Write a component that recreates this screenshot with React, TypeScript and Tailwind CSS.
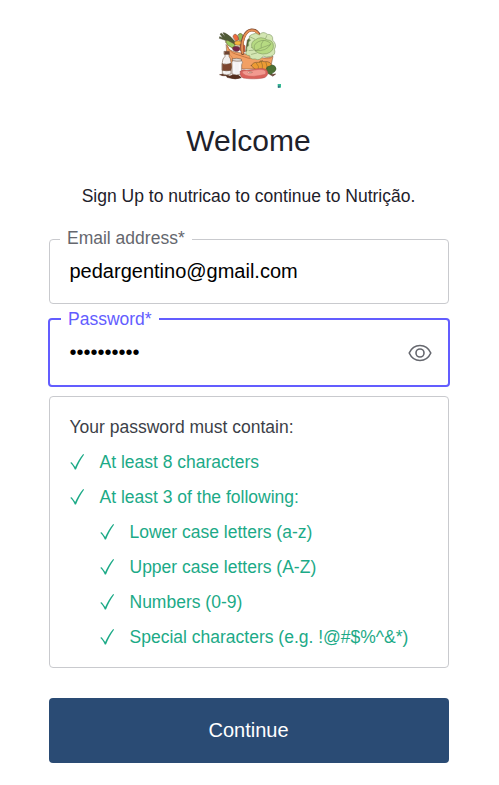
import type { ReactNode } from "react";

function BasketLogo() {
  return (
    <svg viewBox="0 0 240 225" className="h-[75px] w-[80px]" strokeLinejoin="round" strokeLinecap="round" aria-hidden="true">
      <g stroke="#6b4a35" strokeWidth="1.5">
        <path d="M56 66Q42 58 28 55L29 50L38 53L30 42L35 40L46 50L39 38L45 39Q64 48 80 72L68 78Z" fill="#4f5a35" stroke="#4a4a30" />
        <path d="M47 66Q47 59 55 62L72 71L76 79L67 84Q51 77 47 66Z" fill="#9ccb60" />
        <path d="M69 50Q70 41 78 43Q86 49 86 59L77 64Z" fill="#ef6b3d" />
        <path d="M84 44Q91 36 98 44L99 65L88 61Z" fill="#8fbd56" />
        <ellipse cx="84" cy="69" rx="11" ry="7" fill="#f6b340" />
        <path d="M90 75Q99 69 105 77V96L91 92Z" fill="#e95d38" />
        <path d="M67 84Q69 78 78 79Q90 78 90 88Q86 97 75 94Q67 91 67 84Z" fill="#762447" />
        <path d="M107 94L112 60Q124 45 133 60L131 103Z" fill="#4e6d37" />
        <path d="M49 74L58 89Q74 98 94 99L130 108Q164 119 189 109L181 147H66L51 109Z" fill="#f2a064" />
        <path d="M52 77Q58 96 76 102L104 111Q125 119 132 114" fill="none" stroke="#c77642" strokeWidth="3" />
        <path d="M55 99Q66 107 71 121M162 115Q180 119 186 112" fill="none" stroke="#bd7044" />
      </g>
      <path d="M98 100C90 63 106 31 124 30C137 29 146 38 149 49" fill="none" stroke="#7c4a31" strokeWidth="9.5" />
      <path d="M98 99C91 63 107 32 124 31C136 30 144 38 148 49" fill="none" stroke="#e58f55" strokeWidth="6" />
      <g fill="#d3e6b2" stroke="#768e5b" strokeWidth="1.5" transform="translate(-8 -4) scale(1.06 1.04)">
        <path d="M121 62Q113 49 128 45Q137 38 147 47Q157 34 170 45Q187 45 185 62Q198 75 190 88Q195 105 179 109Q166 113 158 108Q148 123 135 116Q120 119 120 107Q103 105 112 92Q109 83 117 77Q114 68 121 62Z" />
        <path d="M126 83Q122 67 136 61Q151 49 169 61Q187 62 187 80Q187 95 168 101Q144 107 126 83Z" fill="#b6da82" />
        <path d="M136 92Q125 76 145 66Q164 57 180 72Q168 96 136 92ZM139 91Q154 83 178 75M152 83Q150 73 158 64M125 103L140 99M120 52L134 59M168 49L165 57M118 92L130 91" fill="none" />
      </g>
      <g stroke="#654731" strokeWidth="1.5">
        <path d="M124 137Q129 125 145 127Q151 120 162 125Q183 122 186 140Q182 154 164 153Q136 155 124 137Z" fill="#ed9b34" />
        <path d="M139 129Q149 138 145 150M153 123Q160 134 157 150M168 127Q174 138 168 150M148 128L158 121" fill="none" stroke="#76602b" />
        <path d="M170 146Q170 138 179 138Q188 131 195 139Q202 147 194 155Q188 157 184 164L176 162Q168 155 170 146Z" fill="#4d7135" stroke="#36512d" />
        <path d="M30 164Q40 160 48 164L60 168L70 163Q86 163 94 173Q75 180 60 174L51 172L49 167Q38 169 30 164ZM182 164L197 162L189 168Z" fill="#552e1e" stroke="#552e1e" />
        <path d="M45 102V109Q37 116 37 127V161Q48 168 63 162V127Q62 115 57 109V102Z" fill="#f2f0ef" />
        <path d="M43 94H58V103H43Z" fill="#704331" />
        <path d="M37 131Q49 135 63 130V151Q49 154 37 151Z" fill="#7d462f" />
        <path d="M42 122L41 129M43 155V160" stroke="#ffffff" strokeWidth="2" />
        <path d="M68 121Q64 127 66 136V162Q79 168 95 162V134Q101 127 94 120Z" fill="#f3f2f3" />
        <path d="M68 116Q80 113 94 117V123Q80 125 68 122Z" fill="#dcd7d4" />
        <path d="M72 130V157M88 131V155" stroke="#ffffff" strokeWidth="2" />
        <path d="M91 154Q99 147 110 151C133 148 151 143 164 147C178 153 176 167 163 173C145 178 115 177 100 174Q88 169 91 154Z" fill="#db625b" stroke="#aa4d49" />
        <path d="M96 156Q101 150 119 153Q149 146 162 150Q171 154 166 163Q145 168 129 169Q101 169 96 156Z" fill="#f29a90" stroke="#c96761" />
        <ellipse cx="120" cy="157" rx="7" ry="2.8" fill="#f9e2d2" stroke="#bd6d60" />
        <path d="M118 157H124" stroke="#8b4c3c" />
      </g>
      <path d="M203 192H213V203H203Z" fill="#35ba94" />
      <path d="M204 197H209V203H204Z" fill="#356b83" />
    </svg>
  );
}

function EyeIcon() {
  return (
    <svg viewBox="0 0 24 18" className="mr-[-3.5px] h-[18px] w-[24px] shrink-0" fill="none" stroke="#65676e" strokeWidth="1.6" aria-hidden="true">
      <path d="M1.2 9C3.4 4.2 7 1.5 12 1.5S20.6 4.2 22.8 9C20.6 13.8 17 16.5 12 16.5S3.4 13.8 1.2 9Z" strokeLinejoin="round" />
      <circle cx="12" cy="9" r="4" />
    </svg>
  );
}

function Requirement({ children }: { children: ReactNode }) {
  return (
    <div className="flex h-[35px] items-center">
      <svg viewBox="0 0 14 16" className="mr-4 h-4 w-[14px] shrink-0" fill="#1caa87" aria-hidden="true">
        <path d="M.2 8.8L1.7 8.2L5.2 13C7.2 8.5 9.7 4.2 13 .2L14.2 .4C10.8 5 8.2 9.8 6 15.4H4.8C3.6 12.8 2.2 10.6 .2 8.8Z" />
      </svg>
      <span className="whitespace-nowrap">{children}</span>
    </div>
  );
}

export default function App() {
  return (
    <main className="min-h-[785px] w-[499px] bg-white pt-5 font-['Liberation_Sans',Arial,sans-serif] text-[#1e212a]">
      <header className="flex flex-col items-center">
        <BasketLogo />
        <h1 className="mr-[2px] mt-[28px] text-[30px] leading-9">Welcome</h1>
        <p className="mr-[2px] mt-[24px] whitespace-nowrap text-[17.5px] leading-[26px]">Sign Up to nutricao to continue to Nutrição.</p>
      </header>
      <form className="ml-[49px] mt-[30px] w-[400px]">
        <div className="relative flex h-[65px] items-center rounded-[4px] border border-[#c9cace] px-[19.5px] pb-[2px] text-[20px] text-black">
          <label className="absolute -top-[14px] left-[10px] whitespace-nowrap bg-white px-[7px] text-[17.5px] leading-6 text-[#65676e]">Email address*</label>
          <span>pedargentino@gmail.com</span>
        </div>
        <div className="relative -mx-px mt-[14px] flex h-[69px] items-center justify-between rounded-[4px] border-2 border-[#635dff] px-[19.5px] text-[20px] text-black">
          <label className="absolute -top-[13px] left-[11px] whitespace-nowrap bg-white px-[7px] text-[17.5px] leading-6 text-[#635dff]">Password*</label>
          <span className="pb-[2px]">••••••••••</span>
          <EyeIcon />
        </div>
        <section className="mt-[9px] h-[272px] rounded-[4px] border border-[#c9cace] px-[19.5px] pt-[17px] text-[17.5px] leading-[26px] text-[#1caa87]">
          <p className="mb-1 text-[#3c3f48]">Your password must contain:</p>
          <Requirement>At least 8 characters</Requirement>
          <Requirement>At least 3 of the following:</Requirement>
          <div className="pl-[30px]">
            <Requirement>Lower case letters (a-z)</Requirement>
            <Requirement>Upper case letters (A-Z)</Requirement>
            <Requirement>Numbers (0-9)</Requirement>
            <Requirement>Special characters (e.g. !@#$%^&amp;*)</Requirement>
          </div>
        </section>
        <button type="button" className="mt-[30px] h-[65px] w-full rounded-[4px] bg-[#2a4b74] pb-[2px] pr-px text-[20px] text-white">Continue</button>
      </form>
    </main>
  );
}
